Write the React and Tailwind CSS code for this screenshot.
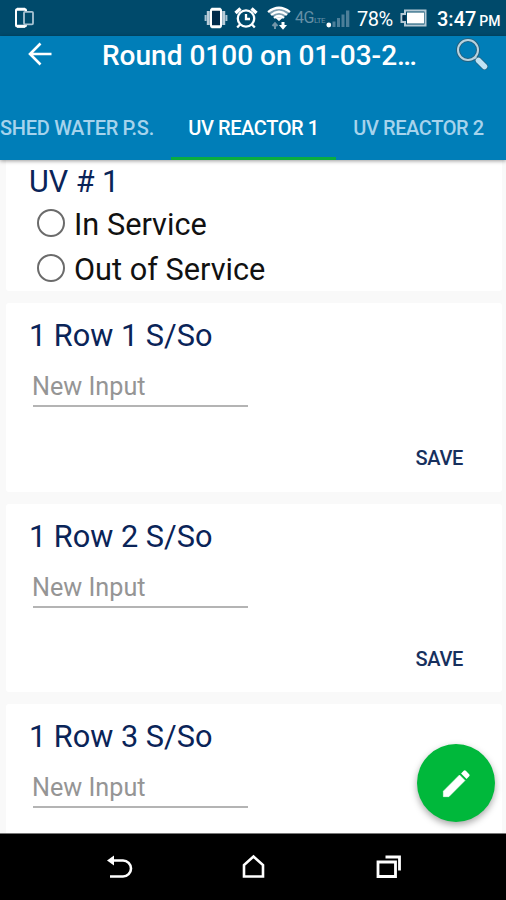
import { useState } from 'react';

const TABS = ['SHED WATER P.S.', 'UV REACTOR 1', 'UV REACTOR 2'];
const STATUSES = ['In Service', 'Out of Service'];
const ROWS = [
  { title: '1 Row 1 S/So', savable: true },
  { title: '1 Row 2 S/So', savable: true },
  { title: '1 Row 3 S/So', savable: false },
];

function StatusBar() {
  return (
    <div className="flex h-9 shrink-0 items-center bg-[#004a6b] text-white">
      <svg className="ml-3.5 h-6 w-5" viewBox="0 0 20 24" fill="none" stroke="currentColor">
        <rect x="2" y="3" width="10" height="17.5" rx="1.5" strokeWidth="2" />
        <path d="M3 3.2h8M3 20.3h8" strokeWidth="3" />
        <rect x="10" y="5.8" width="9" height="12.5" rx="1" fill="#004a6b" stroke="#a9c4d3" strokeWidth="1.8" />
      </svg>

      {/* Vibrate */}
      <svg className="ml-[170px] h-6 w-6" viewBox="0 0 24 24" fill="none" stroke="currentColor">
        <rect x="7" y="3" width="10" height="18" rx="1.5" fill="#002b4b" strokeWidth="2" />
        <path d="M7.5 3.2h9M7.5 20.8h9" strokeWidth="3" />
        <path d="M4.3 5v14M19.7 5v14" stroke="#b9cdd9" strokeWidth="3" />
        <path d="M1.6 9v6M22.4 9v6" stroke="#a9c4d3" strokeWidth="2" />
      </svg>

      {/* Alarm */}
      <svg className="ml-[6px] h-6 w-6" viewBox="0 0 24 24" fill="none" stroke="currentColor" strokeWidth="2.3">
        <circle cx="12" cy="12.5" r="8.2" />
        <path d="M12 8v5h4M6 18.5l-2.8 3M18 18.5l2.8 3" />
        <path d="M1.5 7l5-4.5M22.5 7l-5-4.5" strokeWidth="3.4" />
      </svg>

      {/* Wifi with transfer arrows */}
      <svg className="ml-[9px] h-6 w-6" viewBox="0 0 24 24" fill="none" stroke="currentColor">
        <path d="M1 6Q12-2.5 23 6L12 15z" fill="#7f9fb0" stroke="none" />
        <path d="M1 6Q12-2.5 23 6M4 9Q12 2.5 20 9M7 12Q12 8 17 12" strokeWidth="2.2" />
        <path d="M9.5 12l2.5 2.5 2.5-2.5z" fill="currentColor" />
        <path d="M8 23v-5M5.5 20L8 17.3l2.5 2.7" stroke="#7295a8" strokeWidth="2" />
        <path d="M16 16v5" strokeWidth="3" />
        <path d="M12 19h8L16 23.8z" fill="currentColor" stroke="none" />
      </svg>

      <span className="ml-1 w-7 whitespace-nowrap text-[16px] leading-none tracking-[-0.5px] text-[#6690a6]">
        4G<span className="text-[8px]">LTE</span>
      </span>

      <svg className="ml-[3px] h-6 w-6" viewBox="0 0 24 24" fill="#4d7f99">
        <circle cx="2.8" cy="19" r="2.4" fill="white" />
        <path d="M6.5 15.5h3V21h-3zM11 12h3v9h-3zM15.5 8.5h3V21h-3zM20 4.5h3.3V21H20z" />
      </svg>

      <span className="ml-[7px] mt-0.5 w-[38px] whitespace-nowrap text-[20px] leading-none tracking-[-0.5px]">78%</span>

      <svg className="ml-1 h-[18px] w-7" viewBox="0 0 28 18">
        <path d="M6 1.5h20.5v15H6V13H2.5V5H6z" fill="none" stroke="#b5c9d5" strokeWidth="2" />
        <path d="M8 3.5h17v11H8z" fill="white" />
        <path d="M3.5 6.5h3v5h-3z" fill="#002b4b" />
      </svg>

      <span className="ml-[10px] mt-0.5 whitespace-nowrap text-[20px] font-medium leading-none">
        3:47 <span className="-ml-0.5 text-[14px]">PM</span>
      </span>
    </div>
  );
}

function AppBar() {
  return (
    <div className="flex h-[60px] items-start">
      <button className="ml-7 mt-[6px]" aria-label="Back">
        <svg className="h-6 w-6" viewBox="0 0 24 24" fill="none" stroke="white" strokeWidth="2.6">
          <path d="M23.5 12H2.5M12.5 1.5L2 12l10.5 10.5" />
        </svg>
      </button>
      <h1 className="ml-[50px] mt-1 w-[330px] whitespace-nowrap text-[28px] font-medium leading-8 text-white">Round 0100 on 01-03-2…</h1>
      <button className="ml-6 mt-0.5" aria-label="Search">
        <svg className="h-8 w-8" viewBox="0 0 32 32" fill="none">
          <circle cx="12" cy="12" r="10" stroke="#23617f" strokeWidth="4" />
          <circle cx="12" cy="12" r="10" stroke="#b9d3df" strokeWidth="2" />
          <path d="M18.5 19l3.5 3.5" stroke="#b9d3df" strokeWidth="3" />
          <path d="M22.5 22.5l6 6" stroke="#23617f" strokeWidth="7" strokeLinecap="round" />
          <path d="M22.5 22.5l6 6" stroke="#bfe3f5" strokeWidth="5.5" strokeLinecap="round" />
        </svg>
      </button>
    </div>
  );
}

function Tabs({ active, onChange }) {
  return (
    <div className="flex h-16 text-[20px] font-medium leading-6">
      {TABS.map((tab, i) => (
        <button
          key={tab}
          onClick={() => onChange(i)}
          className={`h-16 shrink-0 whitespace-nowrap border-b-[3px] pt-[3px] ${
            i === 0 ? 'w-[171px] pr-[18px] text-right tracking-[-0.3px]' : 'w-[165px] tracking-[-0.4px]'
          } ${active === i ? 'border-[#0aad3f] text-white' : 'border-transparent text-[#a6d3ec]'}`}
        >
          {tab}
        </button>
      ))}
    </div>
  );
}

function InputCard({ title, savable }) {
  return (
    <section className="h-[188.5px] shrink-0 rounded-[3px] bg-white pl-[23px] pr-[39px] pt-3.5">
      <h2 className="text-[30.7px] font-normal leading-[37px] text-[#0a2458]">{title}</h2>
      <div className="ml-1 mt-[14px] h-[39px] w-[215px] border-b-[2.5px] border-[#b4b4b4] pt-[3px]">
        <input
          placeholder="New Input"
          className="-ml-px block h-8 w-full text-[25.2px] leading-8 text-black outline-none placeholder:text-[#959595]"
        />
      </div>
      {savable && (
        <div className="mt-[39px] flex justify-end">
          <button className="text-[20px] font-medium leading-6 tracking-[-0.3px] text-[#17305d]">SAVE</button>
        </div>
      )}
    </section>
  );
}

function NavBar() {
  return (
    <div className="flex h-[67px] shrink-0 items-center justify-between border-t border-[#777] bg-black pl-[105px] pr-[103px]">
      <svg className="h-7 w-7" viewBox="0 0 28 28" fill="none" stroke="white" strokeWidth="2.6">
        <path d="M6 7.5h12a8 8 0 0 1 0 16H5" />
        <path d="M2 7.5l7-5v10z" fill="white" stroke="none" />
      </svg>
      <svg className="h-7 w-7" viewBox="0 0 28 28" fill="none" stroke="white" strokeWidth="2.6">
        <path d="M4 23.5V12L13.5 3.5 23 12v11.5z" />
      </svg>
      <svg className="h-7 w-7" viewBox="0 0 28 28" fill="none" stroke="white">
        <path d="M3 9h17.5v14.5H3z" strokeWidth="2.8" />
        <path d="M10.5 4h14v13.5" strokeWidth="2.8" />
      </svg>
    </div>
  );
}

export default function App() {
  const [active, setActive] = useState(1);
  const [status, setStatus] = useState('');

  return (
    <div className="relative flex h-[900px] w-[506px] flex-col overflow-hidden bg-[#f9f9f9] font-['Roboto',sans-serif]">
      <StatusBar />
      <header className="z-10 h-[124px] shrink-0 bg-[#007eb8] shadow-[0_1px_4px_rgba(0,0,0,0.4)]">
        <AppBar />
        <Tabs active={active} onChange={setActive} />
      </header>

      <main className="flex min-h-0 flex-1 flex-col gap-3 overflow-hidden pl-1.5 pr-1">
        <section className="h-[131px] shrink-0 rounded-b-[3px] bg-white pl-[23px] pt-1">
          <h2 className="text-[30.5px] leading-9 text-[#0a2458]">UV # 1</h2>
          {STATUSES.map((s) => (
            <label key={s} className="ml-2 flex h-[45px] items-center gap-[9px] text-[30.7px] leading-9 text-[#111]">
              <input
                type="radio"
                name="status"
                checked={status === s}
                onChange={() => setStatus(s)}
                className="size-7 appearance-none rounded-full border-[2.5px] border-[#6b6b6b] checked:border-8"
              />
              <span className="pt-[5px]">{s}</span>
            </label>
          ))}
        </section>
        {ROWS.map((row) => (
          <InputCard key={row.title} {...row} />
        ))}
      </main>

      <button
        aria-label="Edit"
        className="absolute bottom-[78px] right-[11px] flex size-[78px] items-center justify-center rounded-full bg-[#00b83b] shadow-[0_3px_7px_rgba(0,0,0,0.35)]"
      >
        <svg className="size-[35px]" viewBox="0 0 24 24" fill="white">
          <path stroke="white" strokeWidth="0.4" d="M3 17.25V21h3.75L17.81 9.94l-3.75-3.75L3 17.25z" />
          <path d="M20.71 7.04a1 1 0 0 0 0-1.41l-2.34-2.34a1 1 0 0 0-1.41 0l-1.83 1.83 3.75 3.75 1.83-1.83z" />
        </svg>
      </button>

      <NavBar />
    </div>
  );
}
